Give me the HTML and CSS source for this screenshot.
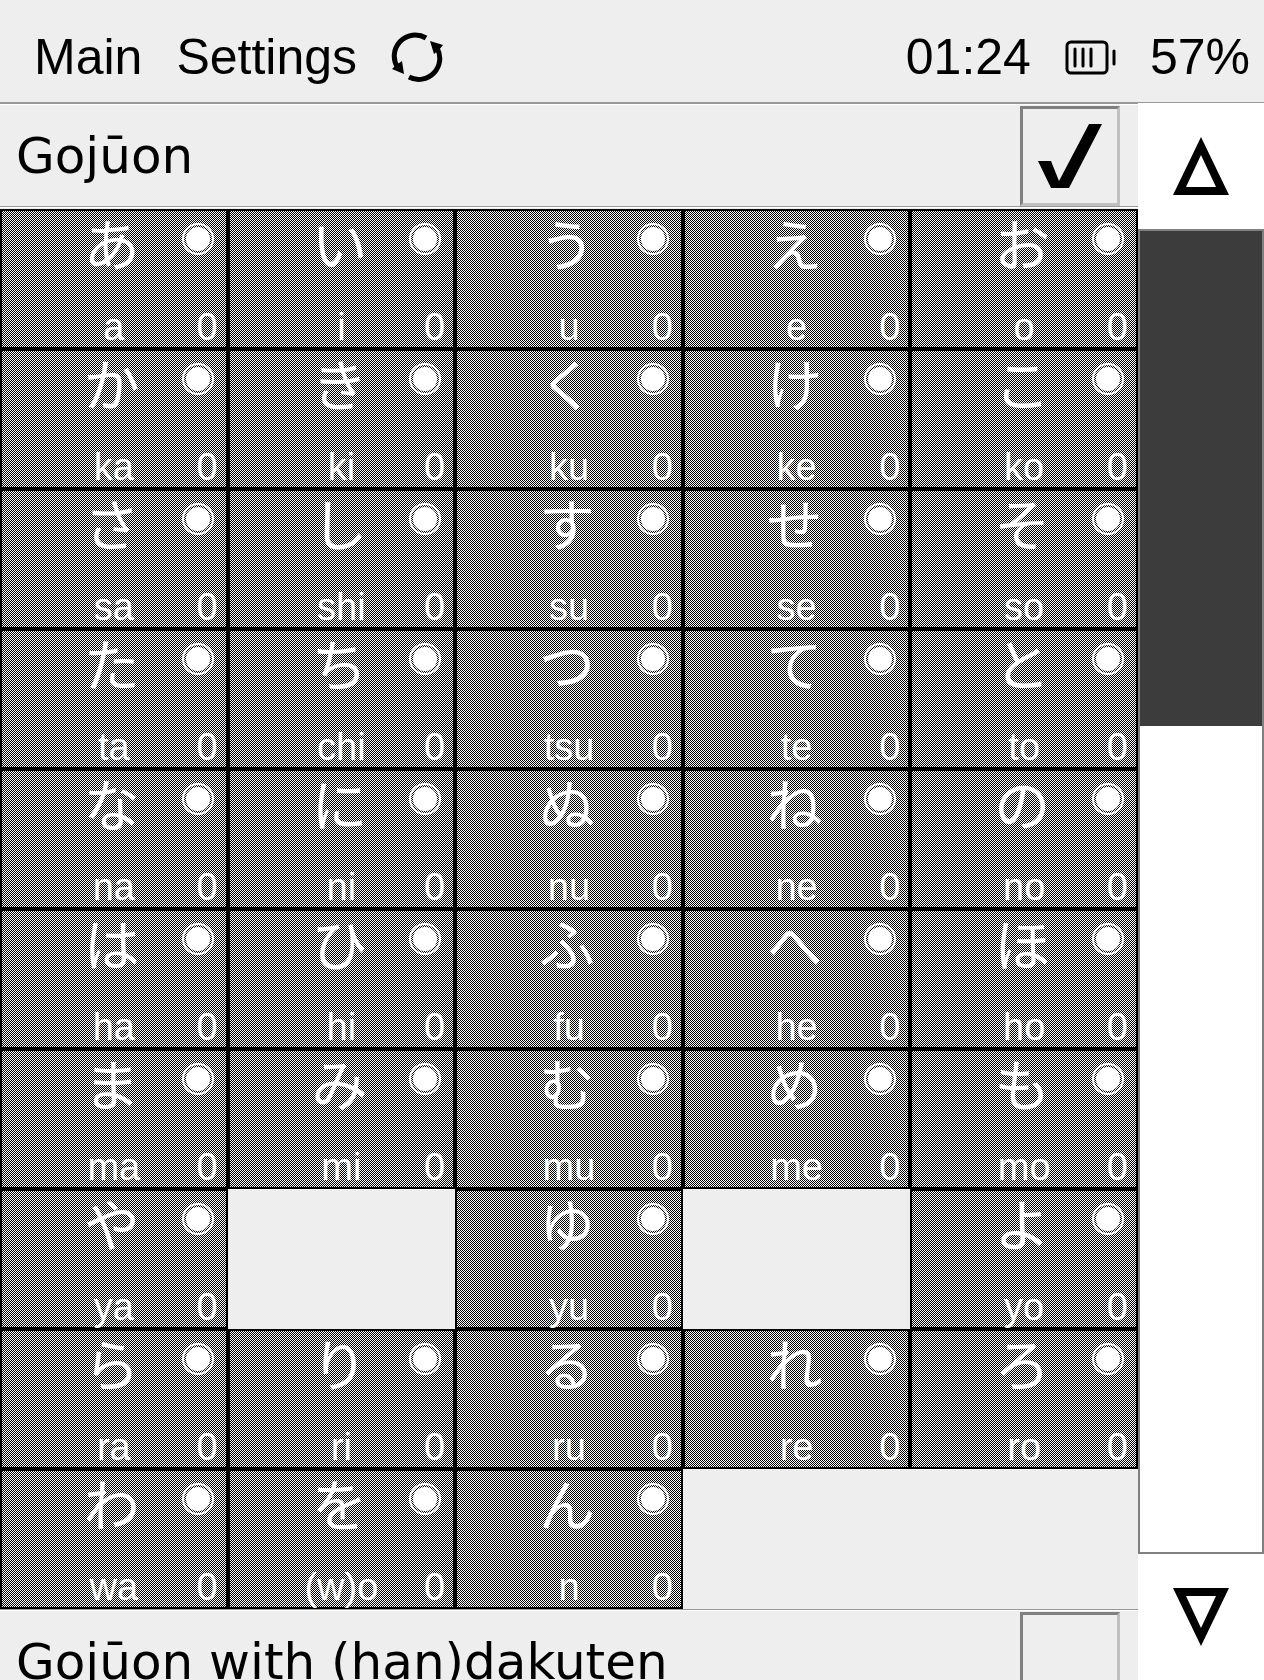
FILE: index.html
```html
<!DOCTYPE html>
<html lang="en">
<head>
<meta charset="utf-8">
<meta name="viewport" content="width=device-width, initial-scale=1">
<title>Kana</title>
<link rel="stylesheet" href="styles.css">
</head>
<body>
<header class="topbar">
  <nav class="menu">
    <button class="menu-item" type="button">Main</button>
    <button class="menu-item" type="button">Settings</button>
    <button class="menu-item" type="button" aria-label="Refresh">
      <svg class="icon" width="52" height="50" viewBox="0 0 52 50" fill="none" stroke="#000" stroke-width="5">
        <path d="M35 6A21 21 0 0 0 7 36"/>
        <path d="M18 45A21 21 0 0 0 46 16"/>
        <path d="M39 9L52 13L48 18L43 22Z M1 37L5 33L11 29L13 42Z" fill="#000" stroke="none"/>
      </svg>
    </button>
  </nav>
  <div class="status">
    <span>01:24</span>
    <svg class="icon" width="51" height="36" viewBox="0 0 51 36" fill="none" stroke="#000" stroke-width="3" stroke-linecap="round">
      <rect x="2" y="3" width="40" height="31" rx="4"/>
      <path d="M10 10V27M18 10V27M26 10V27" />
      <path d="M49 12V25"/>
    </svg>
    <span>57%</span>
  </div>
</header>
<div class="body">
  <main class="list">
    <section>
      <div class="section-head">
        <label for="gojuon">Gojūon</label>
        <input class="check" type="checkbox" id="gojuon" checked>
      </div>
      <div class="grid">
        <button class="cell" type="button"><b>あ</b><i>a</i><u>0</u></button>
        <button class="cell" type="button"><b>い</b><i>i</i><u>0</u></button>
        <button class="cell" type="button"><b>う</b><i>u</i><u>0</u></button>
        <button class="cell" type="button"><b>え</b><i>e</i><u>0</u></button>
        <button class="cell" type="button"><b>お</b><i>o</i><u>0</u></button>
        <button class="cell" type="button"><b>か</b><i>ka</i><u>0</u></button>
        <button class="cell" type="button"><b>き</b><i>ki</i><u>0</u></button>
        <button class="cell" type="button"><b>く</b><i>ku</i><u>0</u></button>
        <button class="cell" type="button"><b>け</b><i>ke</i><u>0</u></button>
        <button class="cell" type="button"><b>こ</b><i>ko</i><u>0</u></button>
        <button class="cell" type="button"><b>さ</b><i>sa</i><u>0</u></button>
        <button class="cell" type="button"><b>し</b><i>shi</i><u>0</u></button>
        <button class="cell" type="button"><b>す</b><i>su</i><u>0</u></button>
        <button class="cell" type="button"><b>せ</b><i>se</i><u>0</u></button>
        <button class="cell" type="button"><b>そ</b><i>so</i><u>0</u></button>
        <button class="cell" type="button"><b>た</b><i>ta</i><u>0</u></button>
        <button class="cell" type="button"><b>ち</b><i>chi</i><u>0</u></button>
        <button class="cell" type="button"><b>つ</b><i>tsu</i><u>0</u></button>
        <button class="cell" type="button"><b>て</b><i>te</i><u>0</u></button>
        <button class="cell" type="button"><b>と</b><i>to</i><u>0</u></button>
        <button class="cell" type="button"><b>な</b><i>na</i><u>0</u></button>
        <button class="cell" type="button"><b>に</b><i>ni</i><u>0</u></button>
        <button class="cell" type="button"><b>ぬ</b><i>nu</i><u>0</u></button>
        <button class="cell" type="button"><b>ね</b><i>ne</i><u>0</u></button>
        <button class="cell" type="button"><b>の</b><i>no</i><u>0</u></button>
        <button class="cell" type="button"><b>は</b><i>ha</i><u>0</u></button>
        <button class="cell" type="button"><b>ひ</b><i>hi</i><u>0</u></button>
        <button class="cell" type="button"><b>ふ</b><i>fu</i><u>0</u></button>
        <button class="cell" type="button"><b>へ</b><i>he</i><u>0</u></button>
        <button class="cell" type="button"><b>ほ</b><i>ho</i><u>0</u></button>
        <button class="cell" type="button"><b>ま</b><i>ma</i><u>0</u></button>
        <button class="cell" type="button"><b>み</b><i>mi</i><u>0</u></button>
        <button class="cell" type="button"><b>む</b><i>mu</i><u>0</u></button>
        <button class="cell" type="button"><b>め</b><i>me</i><u>0</u></button>
        <button class="cell" type="button"><b>も</b><i>mo</i><u>0</u></button>
        <button class="cell" type="button"><b>や</b><i>ya</i><u>0</u></button>
        <div class="blank"></div>
        <button class="cell" type="button"><b>ゆ</b><i>yu</i><u>0</u></button>
        <div class="blank"></div>
        <button class="cell" type="button"><b>よ</b><i>yo</i><u>0</u></button>
        <button class="cell" type="button"><b>ら</b><i>ra</i><u>0</u></button>
        <button class="cell" type="button"><b>り</b><i>ri</i><u>0</u></button>
        <button class="cell" type="button"><b>る</b><i>ru</i><u>0</u></button>
        <button class="cell" type="button"><b>れ</b><i>re</i><u>0</u></button>
        <button class="cell" type="button"><b>ろ</b><i>ro</i><u>0</u></button>
        <button class="cell" type="button"><b>わ</b><i>wa</i><u>0</u></button>
        <button class="cell" type="button"><b>を</b><i>(w)o</i><u>0</u></button>
        <button class="cell" type="button"><b>ん</b><i>n</i><u>0</u></button>
      </div>
    </section>
    <section>
      <div class="section-head ruled">
        <label for="dakuten">Gojūon with (han)dakuten</label>
        <input class="check" type="checkbox" id="dakuten">
      </div>
    </section>
  </main>
  <aside class="scroller">
    <button class="arrow" type="button" aria-label="Scroll up">
      <svg class="icon" width="58" height="58" viewBox="0 0 58 58"><path fill-rule="evenodd" d="M29 0L57 58H1ZM29 18L14 50H44Z"/></svg>
    </button>
    <div class="track"><div class="thumb"></div></div>
    <button class="arrow" type="button" aria-label="Scroll down">
      <svg class="icon" width="58" height="58" viewBox="0 0 58 58"><path fill-rule="evenodd" d="M1 0H57L29 58ZM14 8L29 40L44 8Z"/></svg>
    </button>
  </aside>
</div>
</body>
</html>
```
FILE: styles.css
```css
*, *::before, *::after { box-sizing: border-box; }

body {
  margin: 0;
  height: 100vh;
  display: flex;
  flex-direction: column;
  overflow: hidden;
  background: #eee;
  color: #000;
  font-family: "Liberation Sans", Arial, sans-serif;
  font-size: 50px;
  line-height: 60px;
}

button {
  margin: 0;
  padding: 0;
  border: 0;
  background: none;
  color: inherit;
  font: inherit;
}

.icon { display: block; }

.topbar {
  display: flex;
  justify-content: space-between;
  align-items: center;
  height: 103px;
  padding: 12px 14px 0 34px;
  border-bottom: 1px solid #999;
}

.menu { display: flex; align-items: center; gap: 34px; }
.status { display: flex; align-items: center; gap: 34px; }

.body { flex: 1; min-height: 0; display: flex; }

.list {
  flex: 1;
  min-width: 0;
  overflow: hidden;
  border-top: 1px solid #999;
}

.section-head {
  display: flex;
  justify-content: space-between;
  align-items: center;
  height: 104px;
  padding: 1px 18px 1px 16px;
  border-top: 1px solid #fff;
  border-bottom: 1px solid #fff;
  background: linear-gradient(#999, #999) bottom / 100% 1px no-repeat;
  font-family: "DejaVu Sans", sans-serif;
}

.section-head.ruled { box-shadow: 0 -1px #999; margin-top: 1px; }

.check {
  appearance: none;
  display: grid;
  place-items: center;
  width: 100px;
  height: 100px;
  margin: 0;
  border: 3px solid;
  border-color: #808080 #c0c0c0 #c0c0c0 #808080;
}

.check:checked::before {
  content: "";
  width: 64px;
  height: 64px;
  background: #000;
  clip-path: polygon(0 37px, 13px 37px, 21px 57px, 51px 0, 64px 0, 31px 64px, 13px 64px);
}

.grid {
  display: grid;
  grid-template-columns: repeat(5, 1fr);
  grid-auto-rows: 140px;
  padding-top: 1px;
}

.cell {
  display: grid;
  grid-template-columns: 1fr 70px 1fr;
  grid-template-rows: 88px 48px;
  justify-items: center;
  border: 2px solid #000;
  background: repeating-conic-gradient(#fff 0 25%, #000 0 50%) 0 0 / 2px 2px;
  color: #fff;
  font-size: 38px;
  line-height: 56px;
}

.cell b, .cell i, .cell u {
  font-weight: 400;
  font-style: normal;
  text-decoration: none;
  white-space: nowrap;
}

.cell b {
  grid-area: 1 / 2;
  padding-right: 4px;
  font-family: "Noto Sans CJK JP", sans-serif;
  font-size: 56px;
  line-height: 62px;
}

.cell i { grid-area: 2 / 2; }
.cell u { grid-area: 2 / 3; justify-self: end; padding-right: 8px; }

/* progress marker */
.cell::after {
  content: "";
  grid-area: 1 / 3;
  justify-self: end;
  width: 32px;
  height: 32px;
  margin: 12px 12px 0 0;
  padding: 2px;
  border: 2px solid #fff;
  border-radius: 50%;
  background: #fff content-box;
}

.blank {
  box-shadow: 0 0 0 1px #000;
}

.scroller {
  flex: 0 0 126px;
  display: flex;
  flex-direction: column;
  background: #fff;
}

.arrow {
  flex: 0 0 126px;
  display: grid;
  place-items: center;
}

.track {
  flex: 1;
  border: 2px solid #808080;
}

.thumb {
  height: 37.5%;
  background: #3c3c3c;
}
```
